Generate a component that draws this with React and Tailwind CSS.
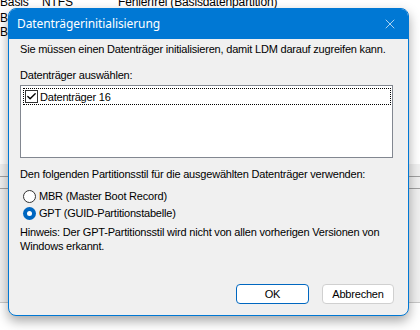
import { Check, X } from "lucide-react";

const sans = { fontFamily: '"Liberation Sans", Arial, sans-serif' };

export default function App() {
  return (
    <div className="relative w-[420px] h-[330px] overflow-hidden bg-white text-black" style={sans}>
      {/* background window content */}
      <div className="flex flex-col text-[12px] tracking-[-0.15px]">
        <div className="-mt-[5px] flex h-[14px] leading-[14px]">
          <span className="w-[42px]">Basis</span>
          <span className="w-[76px]">NTFS</span>
          <span>Fehlerfrei (Basisdatenpartition)</span>
        </div>
        <div className="h-[14px] leading-[14px] mt-[2px]">B</div>
        <div className="h-[14px] leading-[14px]">B</div>
        <div className="mt-[125px] h-[12px] bg-[#f0f0f0]"></div>
        <div className="h-[13px] border-y border-[#a0a0a0] bg-[#f0f0f0]"></div>
        <div className="h-[114px] bg-[#f0f0f0] border-b border-[#c8c8c8]"></div>
        <div className="flex-1 bg-[#f0f0f0]"></div>
      </div>

      {/* dialog window */}
      <div className="absolute left-[8px] top-[8px] w-[401px] h-[308px] flex flex-col rounded-lg border border-[#0078d4] bg-[#f0f0f0] overflow-hidden shadow-[0_5px_12px_rgba(0,0,0,0.35)]">
        <div className="h-[30px] shrink-0 flex items-center justify-between bg-[#0078d4] text-white pl-[8px] pr-[10px]">
          <span className="text-[12px] tracking-[-0.1px]" style={{ fontFamily: '"Noto Sans", "Open Sans", sans-serif' }}>
            Datenträgerinitialisierung
          </span>
          <X size={16} strokeWidth={1} />
        </div>

        <div className="flex flex-col pl-[11px] pr-[15px] text-[11px] tracking-[-0.2px] leading-[14px]">
          <p className="mt-[3px]">Sie müssen einen Datenträger initialisieren, damit LDM darauf zugreifen kann.</p>
          <p className="mt-[12px]">Datenträger auswählen:</p>
          <div className="mt-[3px] h-[73px] border border-[#828790] bg-white pt-[2px] pl-[2px] pr-[1px]">
            <div className="flex items-center h-[17px] border border-dotted border-black">
              <span className="ml-[1px] w-[13px] h-[13px] flex items-center justify-center border border-[#333] bg-white">
                <Check size={11} strokeWidth={3} className="text-black" />
              </span>
              <span className="ml-[2px]">Datenträger 16</span>
            </div>
          </div>
          <p className="mt-[9px]">Den folgenden Partitionsstil für die ausgewählten Datenträger verwenden:</p>
          <label className="mt-[7px] flex items-center h-[16px] pl-[3px]">
            <span className="w-[13px] h-[13px] rounded-full border border-[#333] bg-white"></span>
            <span className="ml-[3px]">MBR (Master Boot Record)</span>
          </label>
          <label className="mt-[1px] flex items-center h-[16px] pl-[3px]">
            <span className="w-[13px] h-[13px] rounded-full bg-[#0067c0] flex items-center justify-center">
              <span className="w-[5px] h-[5px] rounded-full bg-white"></span>
            </span>
            <span className="ml-[3px]">GPT (GUID-Partitionstabelle)</span>
          </label>
          <p className="mt-[4px]">
            Hinweis: Der GPT-Partitionsstil wird nicht von allen vorherigen Versionen von
            <br />
            Windows erkannt.
          </p>
          <div className="mt-[31px] flex justify-end gap-[13px] mr-[-1px]">
            <button className="w-[73px] h-[20px] rounded-[4px] border border-[#0067c0] bg-white text-[11px]">OK</button>
            <button className="w-[72px] h-[20px] rounded-[4px] border border-[#d0d0d0] bg-white text-[11px]">Abbrechen</button>
          </div>
        </div>
      </div>
    </div>
  );
}
